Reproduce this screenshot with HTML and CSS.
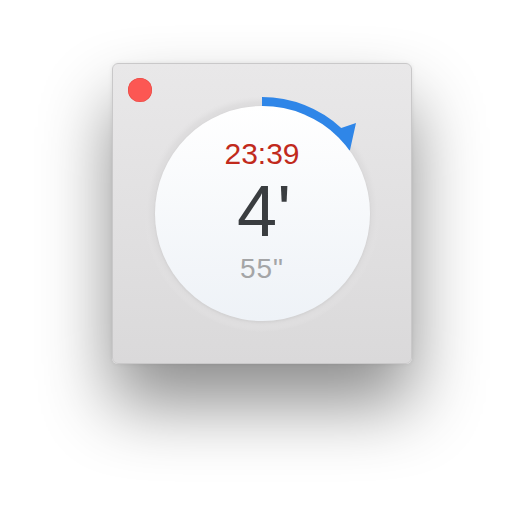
FILE: index.html
```html
<!DOCTYPE html>
<html>
<head>
<meta charset="utf-8">
<link rel="stylesheet" href="styles.css">
</head>
<body>
<div class="desk">
  <div class="window">
    <span class="close"></span>
    <div class="dial">
      <svg class="ring" viewBox="-135 -135 270 270" width="270" height="270">
        <defs>
          <radialGradient id="halo" cx="0" cy="0" r="118" gradientUnits="userSpaceOnUse">
            <stop offset="0.88" stop-color="#d9d8d9"/>
            <stop offset="0.95" stop-color="#dfdedf"/>
            <stop offset="1" stop-color="#e4e3e4" stop-opacity="0"/>
          </radialGradient>
        </defs>
        <circle cx="0" cy="0" r="118" fill="url(#halo)"/>
        <path d="M0,-117 A117,117 0 0 1 79.2,-86.1 L94,-91 L88,-64 L86.6,-62.9 A107,107 0 0 0 0,-107 Z" fill="#2f86e8"/>
      </svg>
      <div class="face">
        <div class="clock">23:39</div>
        <div class="minutes">4'</div>
        <div class="seconds">55"</div>
      </div>
    </div>
  </div>
</div>
</body>
</html>
```
FILE: styles.css
```css
html, body {
  margin: 0;
  padding: 0;
  background: #ffffff;
  width: 524px;
  height: 524px;
  overflow: hidden;
}
.desk {
  display: flex;
  justify-content: center;
  padding-top: 63px;
}
.window {
  position: relative;
  width: 300px;
  height: 301px;
  box-sizing: border-box;
  border-radius: 6px;
  border: 1px solid #c9c8c9;
  background: linear-gradient(#e9e8e9, #dad9da);
  box-shadow: 0 40px 70px rgba(0, 0, 0, 0.45), 0 0 4px rgba(0,0,0,0.08);
  display: grid;
  place-items: center;
}
.close {
  position: absolute;
  left: 15px;
  top: 14px;
  width: 24px;
  height: 24px;
  border-radius: 50%;
  background: #fc5753;
  box-shadow: inset 0 0 0 0.5px #e2463f;
}
.dial {
  display: grid;
  place-items: center;
  width: 270px;
  height: 270px;
  margin-top: 0px;
}
.ring, .face {
  grid-area: 1 / 1;
}
.face {
  width: 215px;
  height: 215px;
  border-radius: 50%;
  background: linear-gradient(#ffffff, #eef2f7);
  box-shadow: 0 1px 3px rgba(0,0,0,0.06);
  display: flex;
  flex-direction: column;
  align-items: center;
  font-family: "Liberation Sans", Arial, sans-serif;
}
.clock {
  margin-top: 31px;
  font-size: 30px;
  line-height: 34px;
  color: #c12a1c;
}
.minutes {
  margin-top: 4px;
  font-size: 72px;
  line-height: 72px;
  color: #3a3d40;
  padding-left: 4px;
}
.seconds {
  margin-top: 6px;
  font-size: 28px;
  line-height: 32px;
  color: #a4a5a7;
  letter-spacing: 1px;
}
```
